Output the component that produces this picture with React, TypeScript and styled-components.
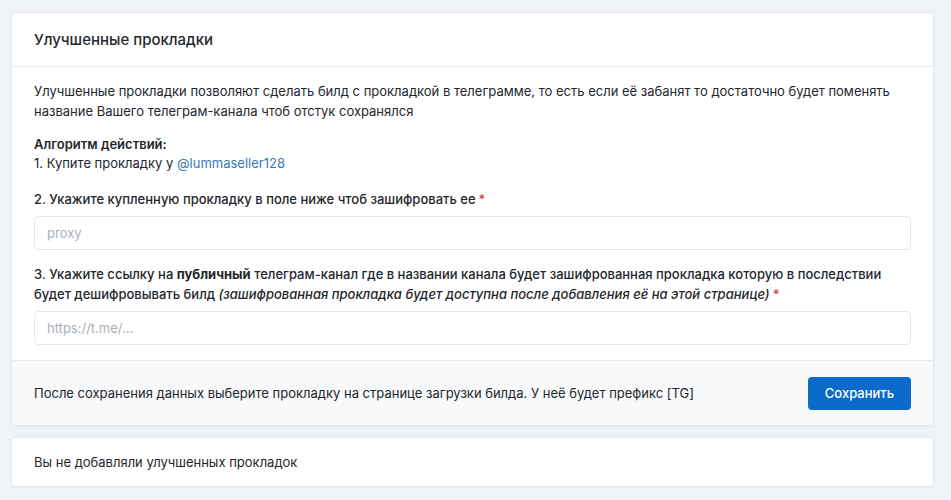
import React from "react";
import styled, { createGlobalStyle } from "styled-components";

const Global = createGlobalStyle`
  html, body { margin: 0; padding: 0; background: #eff2f7; }
  body { font-family: Inter, "Noto Sans", sans-serif; color: #23272c; -webkit-font-smoothing: antialiased; }
  * { box-sizing: border-box; }
`;

const Page = styled.div`
  padding: 12px 17px 13px 11px;
  display: flex;
  flex-direction: column;
  gap: 11px;
`;

const Card = styled.section`
  background: #fff;
  border: 1px solid #e5e8ee;
  border-radius: 4px;
  box-shadow: 0 1px 2px rgba(20, 30, 50, 0.04);
  overflow: hidden;
`;

const Header = styled.div`
  height: 54px;
  padding: 0 22px;
  display: flex;
  align-items: center;
  border-bottom: 1px solid #e7eaef;
  font-size: 15px;
  font-weight: 500;
  color: #25292e;
`;

const Body = styled.div`
  padding: 14px 22px 15px;
  display: flex;
  flex-direction: column;
  font-size: 13px;
  line-height: 20px;
`;

const Para = styled.p<{ $mt?: number }>`
  margin: ${(p) => p.$mt ?? 0}px 0 0;
  line-height: ${(p) => (p.$mt ? "19px" : "20px")};
`;

const Strong = styled.span`
  font-weight: 600;
`;

const Link = styled.a`
  color: #3b79b8;
  text-decoration: none;
`;

const Label = styled.label<{ $mt: number }>`
  display: block;
  margin-top: ${(p) => p.$mt}px;
  font-weight: 500;
  line-height: 20px;
`;

const Bold = styled.b`
  font-weight: 700;
`;

const Em = styled.i`
  font-style: italic;
`;

const Req = styled.span`
  color: #dc3545;
  margin-left: 3px;
`;

const Input = styled.input`
  display: block;
  width: 100%;
  height: 34px;
  margin-top: 7px;
  padding: 0 12px;
  border: 1px solid #e3e6eb;
  border-radius: 4px;
  font: inherit;
  font-size: 13px;
  color: #23272c;
  background: #fff;
  outline: none;
  &::placeholder { color: #a9afb7; }
`;

const Footer = styled.div`
  height: 65px;
  padding: 0 22px;
  display: flex;
  align-items: center;
  justify-content: space-between;
  background: #f8f9fb;
  border-top: 1px solid #e7eaef;
  font-size: 13px;
`;

const Button = styled.button`
  width: 103px;
  height: 33px;
  border: none;
  border-radius: 4px;
  background: #0b6bcb;
  color: #fff;
  font: inherit;
  font-size: 13px;
  font-weight: 500;
  cursor: pointer;
`;

const Empty = styled.div`
  height: 48px;
  padding: 0 22px;
  display: flex;
  align-items: center;
  font-size: 13px;
`;

export default function App() {
  return (
    <>
      <Global />
      <Page>
        <Card>
          <Header>Улучшенные прокладки</Header>
          <Body>
            <Para>
              Улучшенные прокладки позволяют сделать билд с прокладкой в телеграмме, то есть если её забанят то достаточно будет поменять
              название Вашего телеграм-канала чтоб отстук сохранялся
            </Para>
            <Para $mt={14}>
              <Strong>Алгоритм действий:</Strong>
              <br />
              1. Купите прокладку у <Link href="#">@lummaseller128</Link>
            </Para>
            <Label $mt={16}>
              2. Укажите купленную прокладку в поле ниже чтоб зашифровать ее<Req>*</Req>
            </Label>
            <Input placeholder="proxy" />
            <Label $mt={14}>
              3. Укажите ссылку на <Bold>публичный</Bold> телеграм-канал где в названии канала будет зашифрованная прокладка которую в последствии
              будет дешифровывать билд <Em>(зашифрованная прокладка будет доступна после добавления её на этой странице)</Em>
              <Req>*</Req>
            </Label>
            <Input placeholder="https://t.me/..." />
          </Body>
          <Footer>
            <span>После сохранения данных выберите прокладку на странице загрузки билда. У неё будет префикс [TG]</span>
            <Button>Сохранить</Button>
          </Footer>
        </Card>
        <Card>
          <Empty>Вы не добавляли улучшенных прокладок</Empty>
        </Card>
      </Page>
    </>
  );
}
